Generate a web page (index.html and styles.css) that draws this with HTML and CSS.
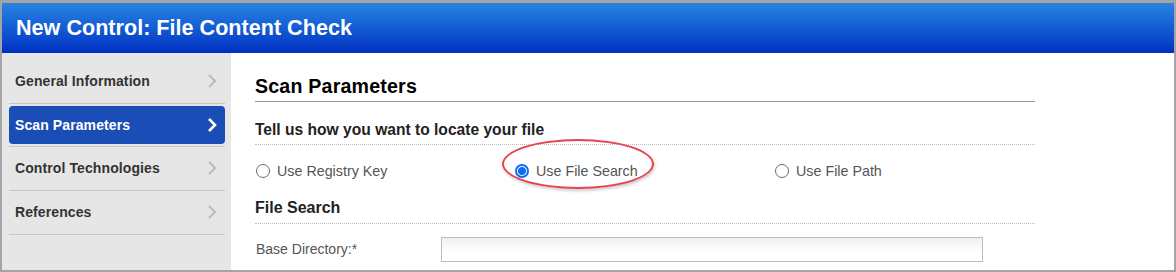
FILE: index.html
```html
<!DOCTYPE html>
<html lang="en">
  <head>
    <meta charset="UTF-8" />
    <title>New Control: File Content Check</title>
    <link rel="stylesheet" href="styles.css">
  </head>
  <body>
    <div class="frame">
      <div class="window-header">New Control: File Content Check</div>

      <div class="window-body">
        <div class="sidebar">
          <div class="nav-item">
            <div class="nav-link">
              <span>General Information</span>
              <svg class="chevron" viewBox="0 0 10 16"><path d="M2 2 L8 8 L2 14" /></svg>
            </div>
          </div>
          <div class="nav-item">
            <div class="nav-link active">
              <span>Scan Parameters</span>
              <svg class="chevron" viewBox="0 0 10 16"><path d="M2 2 L8 8 L2 14" /></svg>
            </div>
          </div>
          <div class="nav-item">
            <div class="nav-link">
              <span>Control Technologies</span>
              <svg class="chevron" viewBox="0 0 10 16"><path d="M2 2 L8 8 L2 14" /></svg>
            </div>
          </div>
          <div class="nav-item">
            <div class="nav-link">
              <span>References</span>
              <svg class="chevron" viewBox="0 0 10 16"><path d="M2 2 L8 8 L2 14" /></svg>
            </div>
          </div>
        </div>

        <div class="content">
          <h2 class="section-title">Scan Parameters</h2>

          <div class="sub-title">Tell us how you want to locate your file</div>

          <div class="radio-group">
            <label class="radio-option">
              <input type="radio" name="locate" />
              <span>Use Registry Key</span>
            </label>
            <label class="radio-option highlighted">
              <input type="radio" name="locate" checked />
              <span>Use File Search</span>
              <span class="callout"></span>
            </label>
            <label class="radio-option">
              <input type="radio" name="locate" />
              <span>Use File Path</span>
            </label>
          </div>

          <div class="sub-title small">File Search</div>

          <div class="form-row">
            <label class="form-label">Base Directory:*</label>
            <input type="text" class="form-input" />
          </div>
        </div>
      </div>
    </div>
  </body>
</html>
```

FILE: styles.css
```css
* {
  margin: 0;
  padding: 0;
  box-sizing: border-box;
}

body {
  font-family: "Liberation Sans", Arial, sans-serif;
  background: white;
  overflow: hidden;
}

.frame {
  width: 1176px;
  height: 272px;
  border: 2px solid #a4a4a4;
  border-top-width: 3px;
  display: flex;
  flex-direction: column;
}

.window-header {
  height: 50px;
  flex-shrink: 0;
  background: linear-gradient(180deg, #2883e0 0%, #1560d6 45%, #0030c2 100%);
  color: white;
  font-size: 21.6px;
  font-weight: bold;
  padding-left: 14px;
  display: flex;
  align-items: center;
}

.window-body {
  flex: 1;
  display: flex;
  min-height: 0;
}

.sidebar {
  width: 229px;
  flex-shrink: 0;
  background: #e6e6e6;
  padding: 7px 6px 0 7px;
}

.nav-item {
  height: 43.7px;
  padding: 2px 0;
  border-bottom: 1px solid #c6c6c6;
}

.nav-link {
  height: 38px;
  padding: 0 8px 0 6px;
  border-radius: 4px;
  display: flex;
  align-items: center;
  justify-content: space-between;
  font-size: 14px;
  font-weight: bold;
  color: #333;
  letter-spacing: 0.1px;
}

.nav-link.active {
  background: #1b4db6;
  color: white;
}

.chevron {
  width: 10px;
  height: 16px;
  fill: none;
  stroke: #bcbcbc;
  stroke-width: 2.2;
}

.nav-link.active .chevron {
  stroke: white;
  stroke-width: 2.6;
}

.content {
  flex: 1;
  padding: 22px 0 0 24px;
}

.section-title,
.sub-title,
.radio-group,
.form-row {
  width: 780px;
}

.section-title {
  font-size: 19.6px;
  font-weight: bold;
  color: #000;
  padding-bottom: 3px;
  border-bottom: 1px solid #9a9a9a;
  letter-spacing: 0.2px;
}

.sub-title {
  margin-top: 19px;
  font-size: 15.6px;
  font-weight: bold;
  color: #222;
  padding-bottom: 5px;
  border-bottom: 1px dotted #bdbdbd;
}

.sub-title.small {
  margin-top: 0;
  font-size: 16px;
  padding-bottom: 6px;
}

.radio-group {
  display: grid;
  grid-template-columns: 259px 260px 1fr;
  height: 54px;
  align-items: center;
  padding-left: 1px;
  padding-bottom: 3px;
}

.radio-option {
  position: relative;
  display: flex;
  align-items: center;
  gap: 7px;
  font-size: 14.3px;
  color: #555;
}

.radio-option input {
  appearance: none;
  width: 14px;
  height: 14px;
  border: 1px solid #6b6b6b;
  border-radius: 50%;
  background: white;
}

.radio-option input:checked {
  border: 2px solid #0b6cf2;
  background: radial-gradient(circle, #0b6cf2 0 3.6px, white 4.4px);
}

.callout {
  position: absolute;
  left: -13px;
  top: -24px;
  width: 152px;
  height: 50px;
  border: 2px solid #e8424f;
  border-radius: 50%;
  box-shadow: 1px 2px 3px rgba(0, 0, 0, 0.2);
}

.form-row {
  display: flex;
  align-items: center;
  height: 49px;
  padding-top: 1px;
}

.form-label {
  width: 186px;
  font-size: 14px;
  color: #555;
  padding-left: 1px;
}

.form-input {
  width: 542px;
  height: 25px;
  border: 1px solid #bdbdbd;
  background: linear-gradient(180deg, #eef0ee 0%, white 60%);
  outline: none;
}
```
